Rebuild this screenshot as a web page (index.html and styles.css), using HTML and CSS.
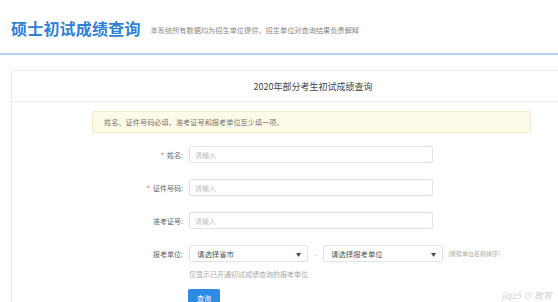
FILE: index.html
```html
<!DOCTYPE html>
<html lang="zh-CN">

<head>
  <meta charset="UTF-8">
  <meta name="viewport" content="width=device-width, initial-scale=1.0">
  <title>硕士初试成绩查询</title>
  <link rel="stylesheet" href="styles.css">
</head>

<body>
  <div class="header">
    <h1 class="site-title">硕士初试成绩查询</h1>
    <span class="site-note">本系统所有数据均为招生单位提供，招生单位对查询结果负责解释</span>
  </div>

  <div class="card">
    <div class="card-head">2020年部分考生初试成绩查询</div>
    <div class="card-body">
      <div class="alert">姓名、证件号码必填，准考证号和报考单位至少填一项。</div>

      <div class="form">
        <div class="form-row">
          <label class="form-label"><span class="req">*</span>姓名:</label>
          <input class="form-input" type="text" placeholder="请输入">
        </div>
        <div class="form-row">
          <label class="form-label"><span class="req">*</span>证件号码:</label>
          <input class="form-input" type="text" placeholder="请输入">
        </div>
        <div class="form-row">
          <label class="form-label">准考证号:</label>
          <input class="form-input" type="text" placeholder="请输入">
        </div>
        <div class="form-row">
          <label class="form-label">报考单位:</label>
          <div class="select select-city">
            <span>请选择省市</span>
            <span class="arrow">&#9660;</span>
          </div>
          <span class="dash">-</span>
          <div class="select select-unit">
            <span>请选择报考单位</span>
            <span class="arrow">&#9660;</span>
          </div>
          <span class="sort-note">(按照单位名称排序)</span>
        </div>
        <div class="hint">仅显示已开通初试成绩查询的报考单位</div>
        <button class="submit">查询</button>
      </div>
    </div>
  </div>

  <div class="watermark">jiqz5 ⊙ 教育</div>
</body>

</html>
```

FILE: styles.css
```css
* {
  margin: 0;
  padding: 0;
  box-sizing: border-box;
}

html,
body {
  width: 558px;
  height: 302px;
  overflow: hidden;
}

body {
  position: relative;
  background-color: #ffffff;
  font-family: "Noto Sans CJK SC", "Noto Sans", sans-serif;
  color: #555555;
}

.header {
  height: 55px;
  padding: 0 0 0 11px;
  display: flex;
  align-items: center;
  border-bottom: 2px solid #b3d6ec;
}

.site-title {
  font-size: 16px;
  font-weight: bold;
  color: #2f80d4;
  letter-spacing: 0.2px;
  line-height: 20px;
  margin-top: 2px;
}

.site-note {
  font-size: 7.2px;
  color: #888888;
  margin-left: 10px;
  margin-top: 6px;
}

.card {
  width: 604px;
  margin: 15px 0 0 11px;
  border: 1px solid #ececec;
  border-bottom: none;
}

.card-head {
  height: 31px;
  border-bottom: 1px solid #ececec;
  display: flex;
  align-items: center;
  justify-content: center;
  font-size: 9px;
  color: #444444;
}

.card-body {
  padding-top: 9px;
}

.alert {
  width: 439px;
  height: 22px;
  margin-left: 80px;
  padding-left: 11px;
  display: flex;
  align-items: center;
  background-color: #fefae8;
  border: 1px solid #f6eccb;
  border-radius: 2px;
  font-size: 7.2px;
  color: #777777;
}

.form {
  margin-top: 13px;
  display: flex;
  flex-direction: column;
}

.form-row {
  display: flex;
  align-items: center;
  height: 17px;
  margin-bottom: 16px;
}

.form-label {
  width: 171px;
  margin-right: 6px;
  text-align: right;
  font-size: 7px;
  color: #666666;
}

.req {
  color: #e84c4c;
  margin-right: 3px;
}

.form-input {
  width: 244px;
  height: 17px;
  border: 1px solid #e2e2e2;
  border-radius: 2px;
  padding-left: 5px;
  font-family: inherit;
  font-size: 7px;
  outline: none;
}

.form-input::placeholder {
  color: #bdbdbd;
}

.select {
  height: 17px;
  border: 1px solid #e2e2e2;
  border-radius: 2px;
  padding: 0 6px 0 7px;
  display: flex;
  align-items: center;
  justify-content: space-between;
  font-size: 7.4px;
  color: #555555;
}

.select-city {
  width: 119px;
}

.select-unit {
  width: 120px;
}

.arrow {
  font-size: 5px;
  color: #444444;
}

.dash {
  width: 15px;
  text-align: center;
  font-size: 7px;
  color: #aaaaaa;
}

.sort-note {
  margin-left: 5px;
  font-size: 6px;
  color: #aaaaaa;
}

.form-row:nth-child(4) {
  margin-bottom: 7px;
}

.hint {
  margin-left: 177px;
  font-size: 7px;
  color: #aaaaaa;
  line-height: 10px;
}

.submit {
  margin: 10px 0 0 176px;
  width: 32px;
  height: 18px;
  border: none;
  border-radius: 2px;
  background-color: #2d8be3;
  color: #ffffff;
  font-family: inherit;
  font-size: 7px;
  align-self: flex-start;
}

.watermark {
  position: absolute;
  right: 6px;
  bottom: 1px;
  font-size: 9px;
  line-height: 11px;
  font-style: italic;
  color: #d4d4d4;
}
```
